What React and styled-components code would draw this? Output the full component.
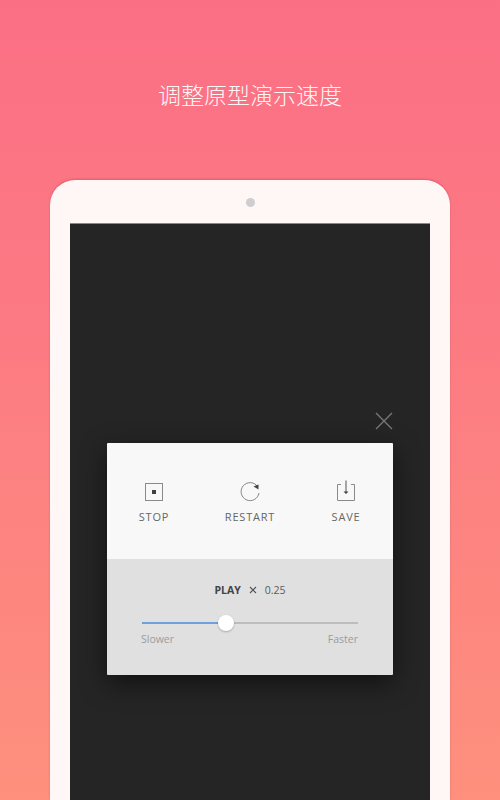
import React from "react";
import styled, { createGlobalStyle } from "styled-components";

const GlobalStyle = createGlobalStyle`
  html, body {
    margin: 0;
    padding: 0;
  }
  body {
    font-family: "Open Sans", "Liberation Sans", sans-serif;
  }
`;

const Page = styled.div`
  width: 500px;
  height: 800px;
  overflow: hidden;
  display: flex;
  flex-direction: column;
  align-items: center;
  background: linear-gradient(180deg, #fb6f85 0%, #fc7a83 40%, #fe907d 100%);
`;

const Title = styled.h1`
  margin: 78px 0 0;
  height: 32px;
  font-family: "Noto Sans CJK SC", sans-serif;
  font-size: 23px;
  line-height: 32px;
  font-weight: 300;
  color: #fff6f6;
`;

const Tablet = styled.div`
  width: 400px;
  margin-top: 70px;
  flex: 1;
  display: flex;
  flex-direction: column;
  align-items: center;
  background: #fff7f6;
  border-radius: 25px 25px 0 0;
  box-shadow: 0 -1px 2px rgba(200, 70, 90, 0.5);
`;

const Camera = styled.div`
  width: 9px;
  height: 9px;
  margin: 18px 0 17px;
  border-radius: 50%;
  background: #cfcdcd;
`;

const Screen = styled.div`
  width: 360px;
  flex: 1;
  display: flex;
  flex-direction: column;
  align-items: center;
  padding-top: 188px;
  background: #262526;
  box-shadow: 0 -1px 0 #8a8888;
`;

const Column = styled.div`
  width: 286px;
  display: flex;
  flex-direction: column;
`;

const CloseIcon = styled.svg`
  align-self: flex-end;
  display: block;
  width: 18px;
  height: 18px;
  margin-bottom: 13px;
`;

const Dialog = styled.div`
  display: flex;
  flex-direction: column;
  border-radius: 1px;
  overflow: hidden;
  box-shadow: 0 8px 26px rgba(0, 0, 0, 0.55);
`;

const Actions = styled.div`
  height: 116px;
  display: grid;
  grid-template-columns: 94px 1fr 94px;
  background: #f8f8f8;
`;

const Action = styled.div`
  display: flex;
  flex-direction: column;
  align-items: center;
  padding-top: 37px;
  gap: 6px;
`;

const ActionIcon = styled.svg`
  display: block;
  width: 24px;
  height: 24px;
`;

const ActionLabel = styled.span`
  font-size: 11px;
  line-height: 14px;
  letter-spacing: 0.8px;
  color: #666;
`;

const Speed = styled.div`
  height: 116px;
  box-sizing: border-box;
  padding: 23px 35px 0;
  display: flex;
  flex-direction: column;
  background: #e0e0e0;
`;

const SpeedRow = styled.div`
  display: flex;
  justify-content: center;
  align-items: center;
  gap: 8px;
  height: 16px;
  font-size: 10.5px;
  color: #5a5a5a;
`;

const Play = styled.span`
  font-weight: 700;
  color: #444;
`;

const Times = styled.svg`
  display: block;
  width: 8px;
  height: 8px;
`;

const Track = styled.div`
  position: relative;
  height: 2px;
  margin-top: 24px;
  background: #bdbdbd;
`;

const Fill = styled.div`
  height: 100%;
  background: #6f9fdc;
`;

const Thumb = styled.div`
  position: absolute;
  top: -7px;
  width: 16px;
  height: 16px;
  margin-left: -8px;
  border-radius: 50%;
  background: #fff;
  box-shadow: 0 1px 2px rgba(0, 0, 0, 0.25);
`;

const Ends = styled.div`
  display: flex;
  justify-content: space-between;
  margin: 8px 0 0 -1px;
  font-size: 10.5px;
  line-height: 14px;
  color: #9c9c9c;
`;

const StopGlyph = () => (
  <ActionIcon viewBox="0 0 24 24" fill="none">
    <rect x="3.5" y="3.5" width="17" height="17" stroke="#8a8a8a" />
    <rect x="10" y="10" width="4" height="4" fill="#3f3f3f" />
  </ActionIcon>
);

const RestartGlyph = () => (
  <ActionIcon viewBox="0 0 24 24" fill="none">
    <path d="M19.5 6.5A9 9 0 1 0 21 13" stroke="#777" strokeWidth="0.9" />
    <path d="M15.5 6.5L20.5 4.5V9.5Z" fill="#444" />
  </ActionIcon>
);

const SaveGlyph = () => (
  <ActionIcon viewBox="0 0 24 24" fill="none">
    <path d="M7 4.5H3.5V20.5H20.5V4.5H17" stroke="#8a8a8a" />
    <path d="M12 0.5V13" stroke="#555" />
    <path d="M9.5 11.5H14.5L12 14Z" fill="#3f3f3f" />
  </ActionIcon>
);

const percent = 39;

const App = () => {
  return (
    <Page>
      <GlobalStyle />
      <Title>调整原型演示速度</Title>
      <Tablet>
        <Camera />
        <Screen>
          <Column>
            <CloseIcon viewBox="0 0 18 18" fill="none">
              <path d="M1 1L17 17M17 1L1 17" stroke="#7c7b7b" strokeWidth="1.2" />
            </CloseIcon>
            <Dialog>
              <Actions>
                <Action>
                  <StopGlyph />
                  <ActionLabel>STOP</ActionLabel>
                </Action>
                <Action>
                  <RestartGlyph />
                  <ActionLabel>RESTART</ActionLabel>
                </Action>
                <Action>
                  <SaveGlyph />
                  <ActionLabel>SAVE</ActionLabel>
                </Action>
              </Actions>
              <Speed>
                <SpeedRow>
                  <Play>PLAY</Play>
                  <Times viewBox="0 0 8 8" fill="none">
                    <path d="M1 1L7 7M7 1L1 7" stroke="#555" strokeWidth="1.1" />
                  </Times>
                  <span>0.25</span>
                </SpeedRow>
                <Track>
                  <Fill style={{ width: `${percent}%` }} />
                  <Thumb style={{ left: `${percent}%` }} />
                </Track>
                <Ends>
                  <span>Slower</span>
                  <span>Faster</span>
                </Ends>
              </Speed>
            </Dialog>
          </Column>
        </Screen>
      </Tablet>
    </Page>
  );
};

export default App;
